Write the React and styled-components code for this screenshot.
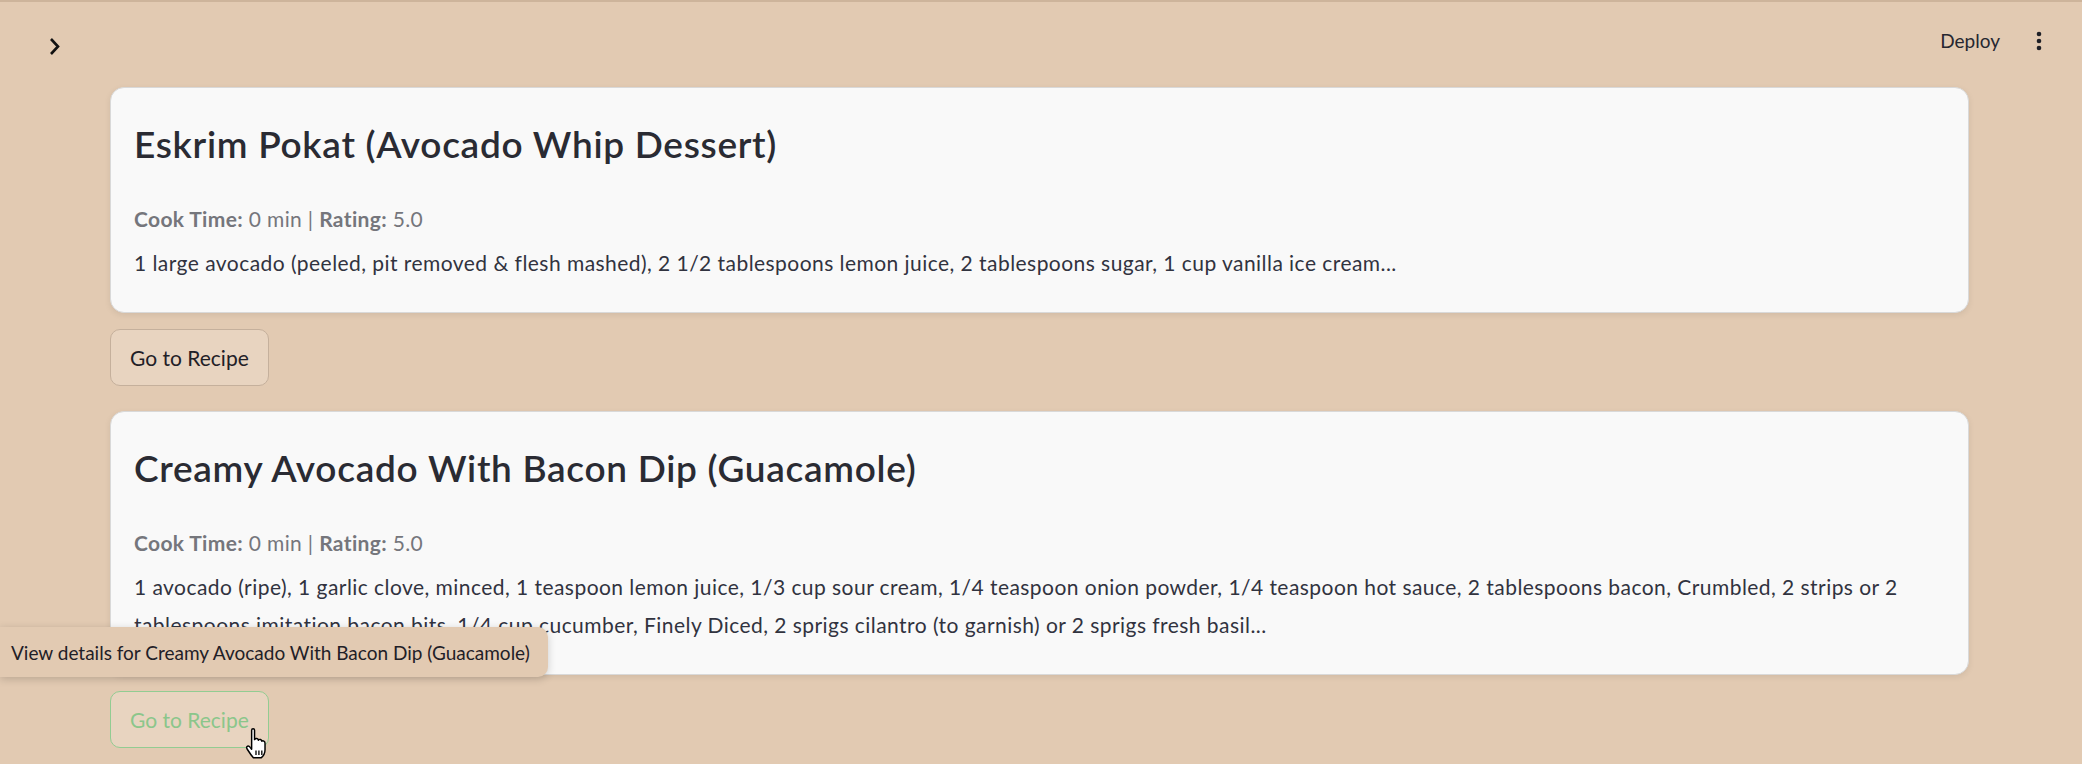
import React from 'react';
import styled, {createGlobalStyle} from 'styled-components';

const GlobalStyle = createGlobalStyle`
  html, body {
    margin: 0;
    padding: 0;
    background: #e2cab2;
  }
  body {
    font-family: Lato, "Liberation Sans", sans-serif;
    color: #31333f;
    -webkit-font-smoothing: antialiased;
  }
`;

const Page = styled.div`
  position: relative;
  min-height: 764px;
  overflow: hidden;
  background: #e2cab2;
  border-top: 2px solid #cdb49b;
  box-sizing: border-box;
`;

const Header = styled.header`
  display: flex;
  align-items: flex-start;
  justify-content: space-between;
  height: 85px;
  padding: 0 40px 0 48px;
`;

const Chevron = styled.svg`
  margin-top: 35px;
`;

const HeaderRight = styled.div`
  display: flex;
  align-items: center;
  gap: 36px;
  margin-top: 25px;
`;

const DeployLink = styled.span`
  font-size: 19px;
  line-height: 28px;
  color: #262730;
`;

const Main = styled.main`
  display: flex;
  flex-direction: column;
  align-items: flex-start;
  padding: 0 113px 0 110px;
`;

const Card = styled.section`
  box-sizing: border-box;
  width: 100%;
  background: #f9f9f9;
  border: 1px solid #d9d9d9;
  border-radius: 14px;
  box-shadow: 0 2px 6px rgba(0, 0, 0, 0.08);
  padding: 32px 23px 30px;
`;

const Title = styled.h3`
  margin: 0;
  font-size: 37px;
  line-height: 48px;
  font-weight: 600;
  letter-spacing: 0.7px;
  color: #2a2b33;
`;

const Meta = styled.p`
  margin: 36px 0 0;
  font-size: 21px;
  line-height: 30px;
  letter-spacing: 0.35px;
  color: #75767c;

  b {
    font-weight: 700;
  }
`;

const Ingredients = styled.p`
  margin: 10px 0 0;
  font-size: 21px;
  line-height: 38px;
  letter-spacing: 0.45px;
  color: #31333f;
`;

const RecipeButton = styled.button`
  box-sizing: border-box;
  height: 57px;
  margin: 16px 0 25px;
  padding: 0 19px;
  font-family: inherit;
  font-size: 21px;
  color: ${p => (p.$hover ? '#8bc68b' : '#1f2027')};
  background: #e8d4c0;
  border: 1px solid ${p => (p.$hover ? '#92cc92' : '#c5b09c')};
  border-radius: 10px;
  cursor: pointer;
`;

const Tooltip = styled.div`
  position: absolute;
  left: 0;
  top: 625px;
  box-sizing: border-box;
  height: 50px;
  padding: 0 18px 0 11px;
  display: flex;
  align-items: center;
  font-size: 19px;
  color: #1f2027;
  background: #e2cab2;
  border-radius: 0 10px 10px 0;
  box-shadow: 0 2px 8px rgba(0, 0, 0, 0.18);
`;

const Cursor = styled.svg`
  position: absolute;
  left: 244px;
  top: 726px;
`;

const recipes = [
  {
    title: 'Eskrim Pokat (Avocado Whip Dessert)',
    time: '0 min',
    rating: '5.0',
    ingredients:
      '1 large avocado (peeled, pit removed & flesh mashed), 2 1/2 tablespoons lemon juice, 2 tablespoons sugar, 1 cup vanilla ice cream...',
  },
  {
    title: 'Creamy Avocado With Bacon Dip (Guacamole)',
    time: '0 min',
    rating: '5.0',
    ingredients:
      '1 avocado (ripe), 1 garlic clove, minced, 1 teaspoon lemon juice, 1/3 cup sour cream, 1/4 teaspoon onion powder, 1/4 teaspoon hot sauce, 2 tablespoons bacon, Crumbled, 2 strips or 2 tablespoons imitation bacon bits, 1/4 cup cucumber, Finely Diced, 2 sprigs cilantro (to garnish) or 2 sprigs fresh basil...',
  },
];

export default function App() {
  return (
    <Page>
      <GlobalStyle />
      <Header>
        <Chevron width="14" height="19" viewBox="0 0 14 19">
          <polyline points="3,2 10,9.5 3,17" fill="none" stroke="#111" strokeWidth="2.6" />
        </Chevron>
        <HeaderRight>
          <DeployLink>Deploy</DeployLink>
          <svg width="6" height="20" viewBox="0 0 6 20">
            <circle cx="3" cy="3" r="2.3" fill="#1f2027" />
            <circle cx="3" cy="10" r="2.3" fill="#1f2027" />
            <circle cx="3" cy="17" r="2.3" fill="#1f2027" />
          </svg>
        </HeaderRight>
      </Header>
      <Main>
        {recipes.map((r, i) => (
          <React.Fragment key={r.title}>
            <Card>
              <Title>{r.title}</Title>
              <Meta>
                <b>Cook Time:</b> {r.time} | <b>Rating:</b> {r.rating}
              </Meta>
              <Ingredients>{r.ingredients}</Ingredients>
            </Card>
            <RecipeButton $hover={i === 1}>Go to Recipe</RecipeButton>
          </React.Fragment>
        ))}
      </Main>
      <Tooltip>View details for Creamy Avocado With Bacon Dip (Guacamole)</Tooltip>
      <Cursor width="24" height="32" viewBox="0 0 16 22">
        <path
          d="M5 1.5 Q5 0.5 6 0.5 Q7 0.5 7 1.5 L7 8 Q7.5 7 8.5 7.2 Q9.6 7.4 9.6 8.4 Q10.2 7.6 11.1 7.9 Q12 8.2 12 9.1 Q12.6 8.6 13.4 9 Q14.2 9.4 14.2 10.4 L14.2 15 Q14.2 18.5 11.5 20.5 L6.2 20.5 Q4.5 18.5 2 14.6 Q1 13 2.2 12.5 Q3.2 12.2 4 13.3 L5 14.6 Z"
          fill="#fff"
          stroke="#000"
          strokeWidth="1"
          strokeLinejoin="round"
        />
        <path d="M8 15.5 V18.5 M10 15.5 V18.5 M12 15.5 V18.5" stroke="#000" strokeWidth="0.9" />
      </Cursor>
    </Page>
  );
}
